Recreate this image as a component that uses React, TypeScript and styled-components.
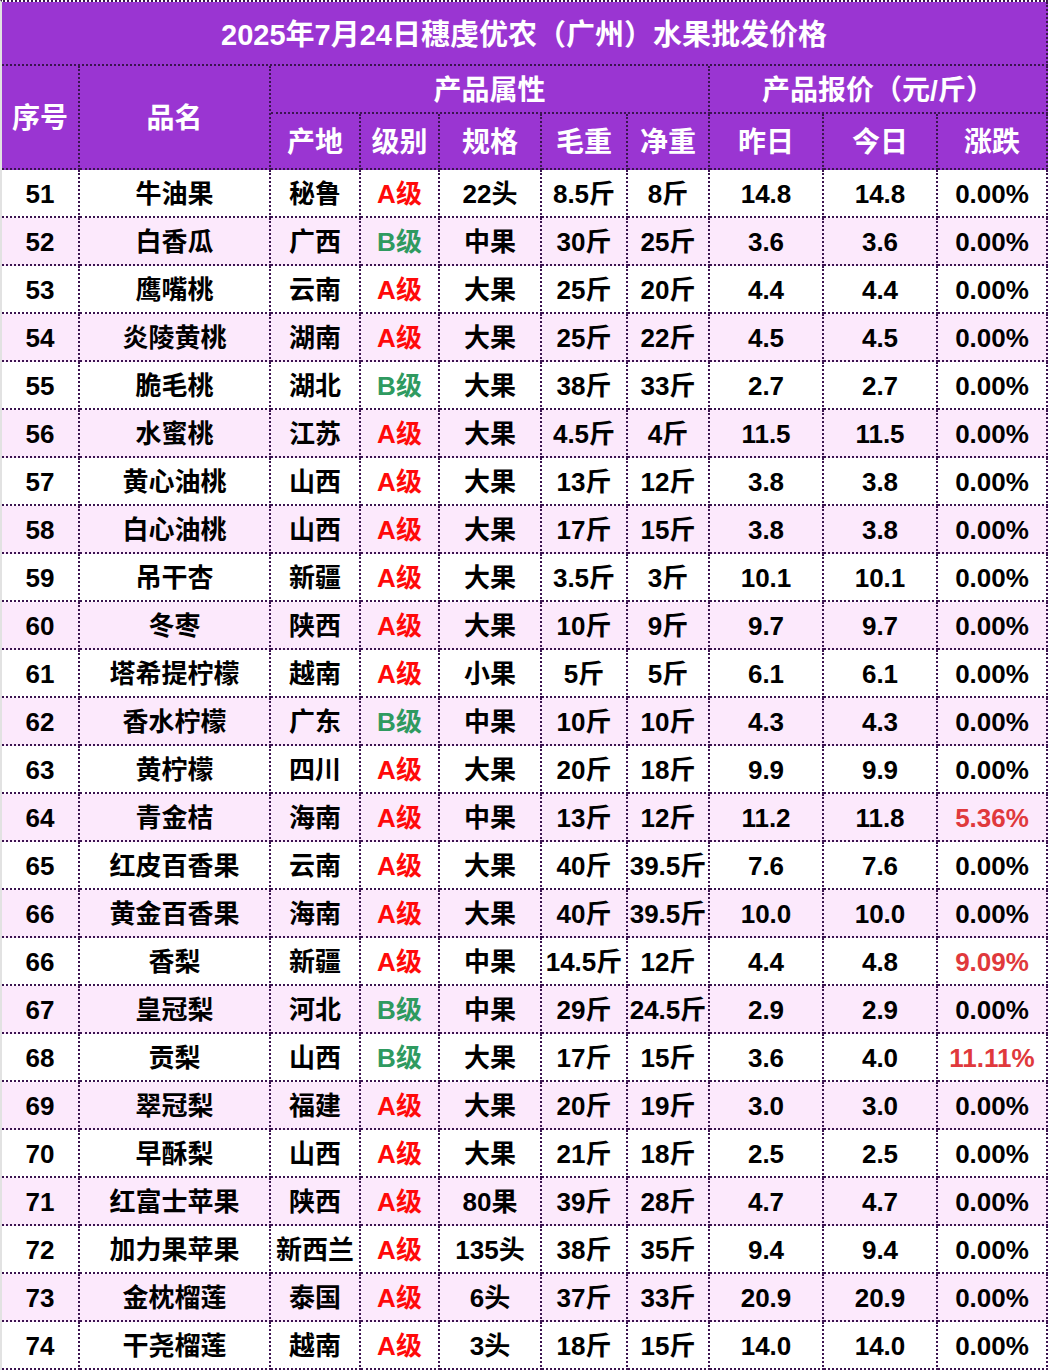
import React from "react";
import styled, { createGlobalStyle, css } from "styled-components";

const GlobalStyle = createGlobalStyle`
  html, body { margin: 0; padding: 0; background: #ffffff; }
  body { font-family: "Liberation Sans", "Noto Sans CJK SC", sans-serif; }
  * { box-sizing: border-box; }
`;

const LINE = "#3b1450";
const PURPLE = "#9a35d2";
const PINK = "#fce9fc";
const COLS = "78px 191px 90px 79px 102px 86px 82px 114px 114px 110px";

const Sheet = styled.div`
  width: 1048px;
  border-top: 2px dotted ${LINE};
  border-left: 2px solid #e2e2e2;
  font-family: "Liberation Sans", "Noto Sans CJK SC", sans-serif;
  font-weight: 700;
`;

const Title = styled.div`
  height: 64px;
  background: ${PURPLE};
  color: #ffffff;
  font-size: 29px;
  line-height: 34px;
  display: flex;
  align-items: center;
  justify-content: center;
  border-right: 2px dotted ${LINE};
  border-bottom: 2px dotted ${LINE};
  padding-top: 4px;
`;

const HeadGrid = styled.div`
  display: grid;
  grid-template-columns: ${COLS};
  grid-template-rows: 48px 56px;
  background: ${PURPLE};
`;

const HeadCell = styled.div<{ $col: string; $row: string }>`
  grid-column: ${(p) => p.$col};
  grid-row: ${(p) => p.$row};
  display: flex;
  align-items: center;
  justify-content: center;
  color: #ffffff;
  font-size: 28px;
  line-height: 32px;
  padding-top: 4px;
  white-space: nowrap;
  border-right: 2px dotted ${LINE};
  border-bottom: 2px dotted ${LINE};
`;

const Row = styled.div<{ $alt: boolean }>`
  display: grid;
  grid-template-columns: ${COLS};
  height: 48px;
  background: ${(p) => (p.$alt ? PINK : "#ffffff")};
`;

type Tone = "plain" | "gradeA" | "gradeB" | "rise";

const Cell = styled.div<{ $tone?: Tone }>`
  display: flex;
  align-items: center;
  justify-content: center;
  font-size: 26px;
  line-height: 30px;
  padding-top: 2px;
  white-space: nowrap;
  overflow: visible;
  color: #000000;
  border-right: 2px dotted ${LINE};
  border-bottom: 2px dotted ${LINE};
  ${(p) =>
    p.$tone === "gradeA" &&
    css`
      color: #ff0a0a;
    `}
  ${(p) =>
    p.$tone === "gradeB" &&
    css`
      color: #2f9a60;
    `}
  ${(p) =>
    p.$tone === "rise" &&
    css`
      color: #e0393c;
    `}
`;

type Item = [string, string, string, "A" | "B", string, string, string, string, string, string];

const rows: Item[] = [
  ["51", "牛油果", "秘鲁", "A", "22头", "8.5斤", "8斤", "14.8", "14.8", "0.00%"],
  ["52", "白香瓜", "广西", "B", "中果", "30斤", "25斤", "3.6", "3.6", "0.00%"],
  ["53", "鹰嘴桃", "云南", "A", "大果", "25斤", "20斤", "4.4", "4.4", "0.00%"],
  ["54", "炎陵黄桃", "湖南", "A", "大果", "25斤", "22斤", "4.5", "4.5", "0.00%"],
  ["55", "脆毛桃", "湖北", "B", "大果", "38斤", "33斤", "2.7", "2.7", "0.00%"],
  ["56", "水蜜桃", "江苏", "A", "大果", "4.5斤", "4斤", "11.5", "11.5", "0.00%"],
  ["57", "黄心油桃", "山西", "A", "大果", "13斤", "12斤", "3.8", "3.8", "0.00%"],
  ["58", "白心油桃", "山西", "A", "大果", "17斤", "15斤", "3.8", "3.8", "0.00%"],
  ["59", "吊干杏", "新疆", "A", "大果", "3.5斤", "3斤", "10.1", "10.1", "0.00%"],
  ["60", "冬枣", "陕西", "A", "大果", "10斤", "9斤", "9.7", "9.7", "0.00%"],
  ["61", "塔希提柠檬", "越南", "A", "小果", "5斤", "5斤", "6.1", "6.1", "0.00%"],
  ["62", "香水柠檬", "广东", "B", "中果", "10斤", "10斤", "4.3", "4.3", "0.00%"],
  ["63", "黄柠檬", "四川", "A", "大果", "20斤", "18斤", "9.9", "9.9", "0.00%"],
  ["64", "青金桔", "海南", "A", "中果", "13斤", "12斤", "11.2", "11.8", "5.36%"],
  ["65", "红皮百香果", "云南", "A", "大果", "40斤", "39.5斤", "7.6", "7.6", "0.00%"],
  ["66", "黄金百香果", "海南", "A", "大果", "40斤", "39.5斤", "10.0", "10.0", "0.00%"],
  ["66", "香梨", "新疆", "A", "中果", "14.5斤", "12斤", "4.4", "4.8", "9.09%"],
  ["67", "皇冠梨", "河北", "B", "中果", "29斤", "24.5斤", "2.9", "2.9", "0.00%"],
  ["68", "贡梨", "山西", "B", "大果", "17斤", "15斤", "3.6", "4.0", "11.11%"],
  ["69", "翠冠梨", "福建", "A", "大果", "20斤", "19斤", "3.0", "3.0", "0.00%"],
  ["70", "早酥梨", "山西", "A", "大果", "21斤", "18斤", "2.5", "2.5", "0.00%"],
  ["71", "红富士苹果", "陕西", "A", "80果", "39斤", "28斤", "4.7", "4.7", "0.00%"],
  ["72", "加力果苹果", "新西兰", "A", "135头", "38斤", "35斤", "9.4", "9.4", "0.00%"],
  ["73", "金枕榴莲", "泰国", "A", "6头", "37斤", "33斤", "20.9", "20.9", "0.00%"],
  ["74", "干尧榴莲", "越南", "A", "3头", "18斤", "15斤", "14.0", "14.0", "0.00%"],
];

export default function App() {
  return (
    <>
      <GlobalStyle />
      <Sheet>
        <Title>2025年7月24日穗虔优农（广州）水果批发价格</Title>
        <HeadGrid>
          <HeadCell $col="1" $row="1 / span 2">序号</HeadCell>
          <HeadCell $col="2" $row="1 / span 2">品名</HeadCell>
          <HeadCell $col="3 / span 5" $row="1">产品属性</HeadCell>
          <HeadCell $col="8 / span 3" $row="1">产品报价（元/斤）</HeadCell>
          <HeadCell $col="3" $row="2">产地</HeadCell>
          <HeadCell $col="4" $row="2">级别</HeadCell>
          <HeadCell $col="5" $row="2">规格</HeadCell>
          <HeadCell $col="6" $row="2">毛重</HeadCell>
          <HeadCell $col="7" $row="2">净重</HeadCell>
          <HeadCell $col="8" $row="2">昨日</HeadCell>
          <HeadCell $col="9" $row="2">今日</HeadCell>
          <HeadCell $col="10" $row="2">涨跌</HeadCell>
        </HeadGrid>
        {rows.map((r, i) => (
          <Row key={i} $alt={i % 2 === 1}>
            <Cell>{r[0]}</Cell>
            <Cell>{r[1]}</Cell>
            <Cell>{r[2]}</Cell>
            <Cell $tone={r[3] === "A" ? "gradeA" : "gradeB"}>{r[3]}级</Cell>
            <Cell>{r[4]}</Cell>
            <Cell>{r[5]}</Cell>
            <Cell>{r[6]}</Cell>
            <Cell>{r[7]}</Cell>
            <Cell>{r[8]}</Cell>
            <Cell $tone={r[9] !== "0.00%" ? "rise" : "plain"}>{r[9]}</Cell>
          </Row>
        ))}
      </Sheet>
    </>
  );
}
